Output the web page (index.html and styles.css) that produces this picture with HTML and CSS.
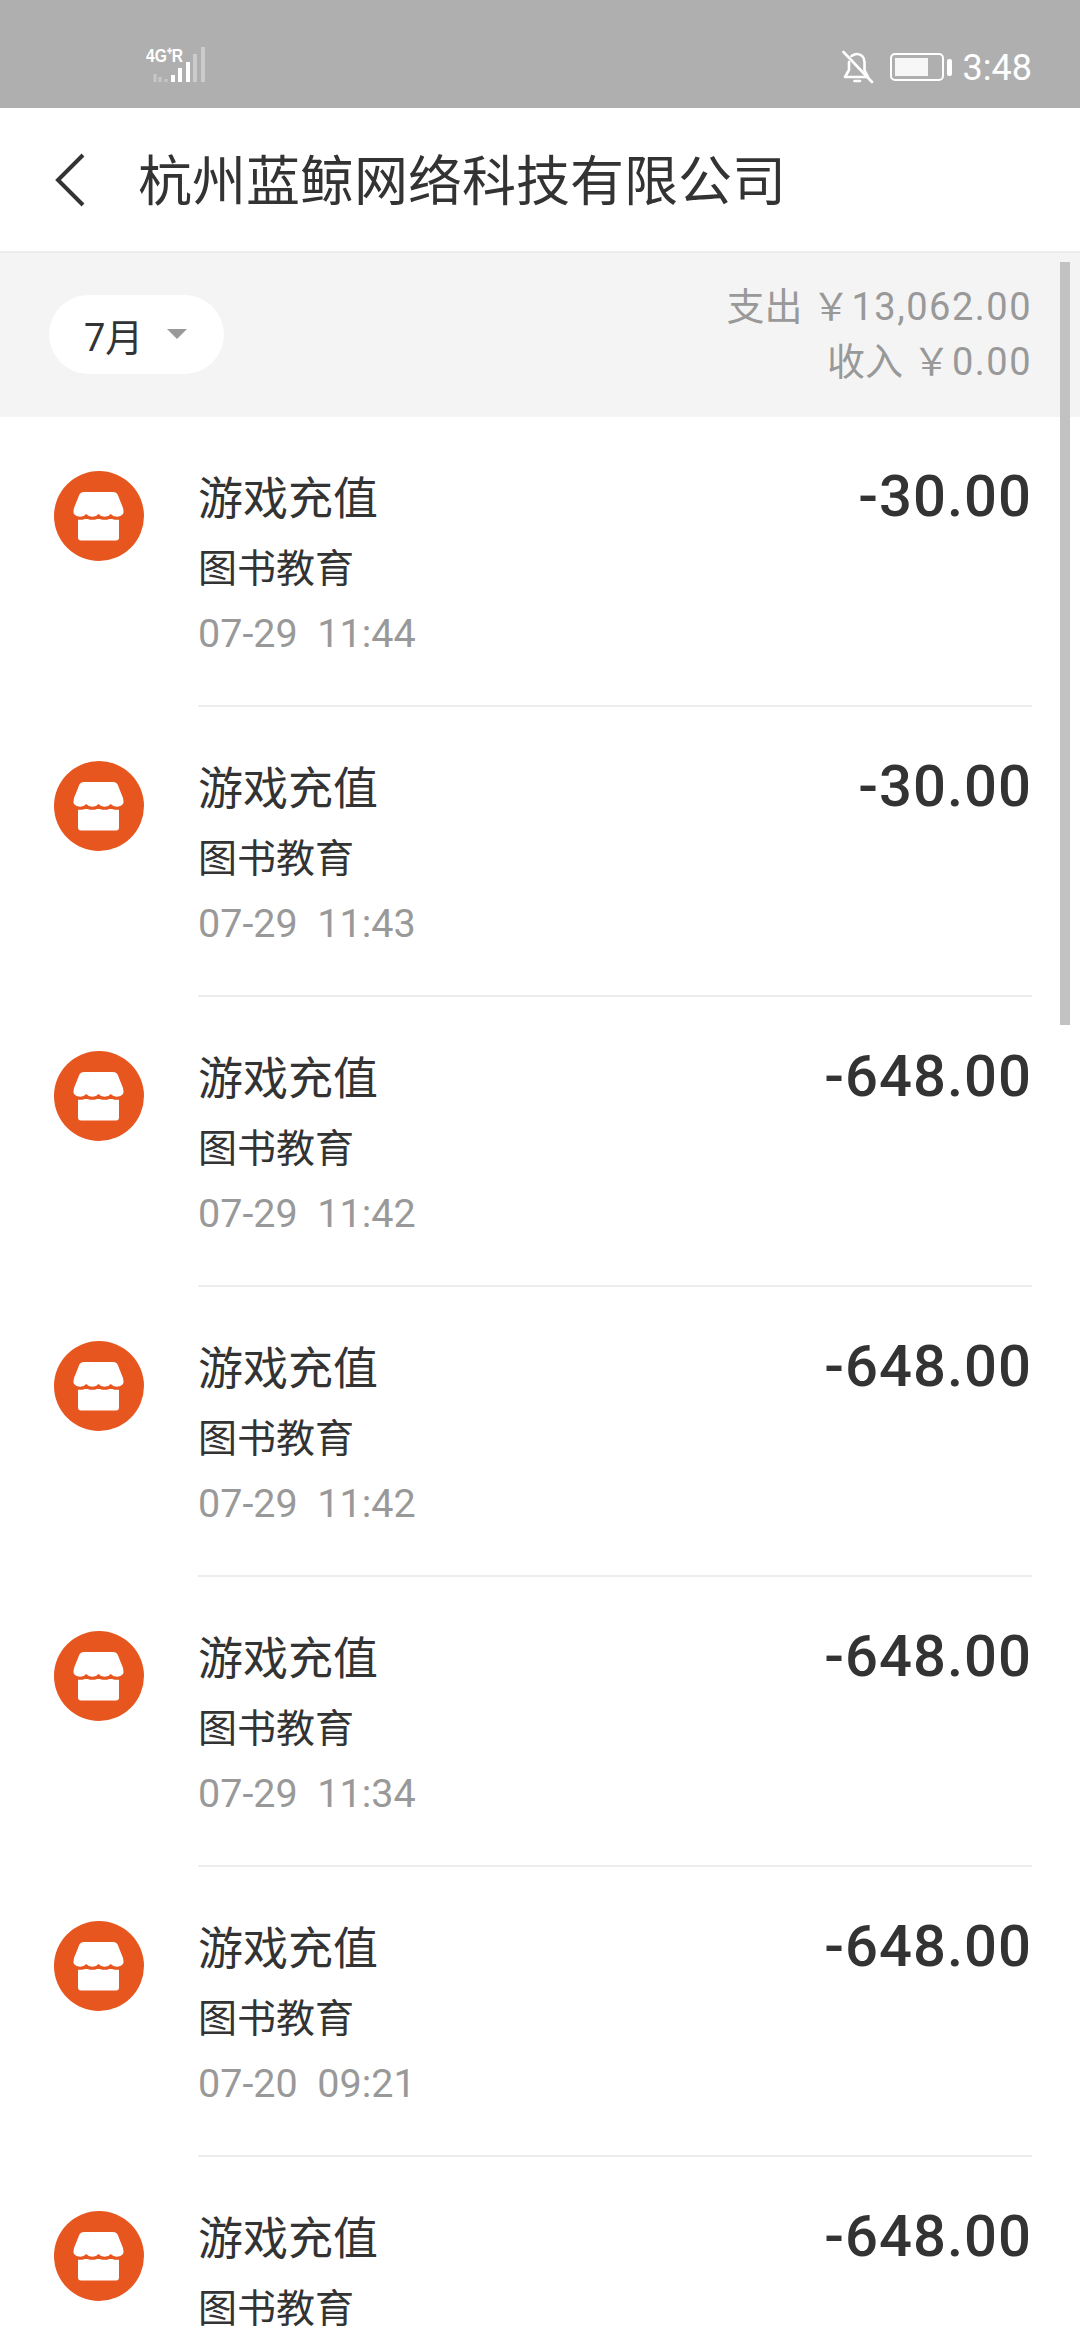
FILE: index.html
```html
<!DOCTYPE html>
<html lang="zh-CN">
<head>
    <meta charset="UTF-8">
    <meta name="viewport" content="width=device-width, initial-scale=1.0">
    <title>杭州蓝鲸网络科技有限公司</title>
    <link rel="stylesheet" href="styles.css">
</head>
<body>
    <svg class="sprites" width="0" height="0">
        <symbol id="store" viewBox="0 0 90 90">
            <circle cx="45" cy="45" r="45" fill="#e8561f"/>
            <rect x="24" y="40" width="41" height="29.5" rx="3" fill="#fff"/>
            <path d="M30 21H59Q63 21 64 24.5L69 37Q70 41 69 43A8 8 0 0 1 56.75 43A8 8 0 0 1 44.5 43A8 8 0 0 1 32.25 43A8 8 0 0 1 20 43Q19 41 20 37L25 24.5Q26 21 30 21Z" fill="#fff" stroke="#e8561f" stroke-width="6" paint-order="stroke"/>
        </symbol>
    </svg>

    <div class="status-bar">
        <svg class="signal" width="62" height="40" viewBox="0 0 62 40">
            <text class="signal-label" x="0" y="17" textLength="37" lengthAdjust="spacingAndGlyphs">4G⁺R</text>
            <path d="M9 29v8M14 32v5M20 34v3" stroke="#fff" stroke-opacity=".3" stroke-width="3"/>
            <path d="M27 30v7M34 23v14M42 17v20" stroke="#fff" stroke-width="4"/>
            <path d="M49 9v28M57 2v35" stroke="#fff" stroke-opacity=".35" stroke-width="4"/>
        </svg>
        <div class="status-right">
            <svg class="bell" width="32" height="34" viewBox="0 0 32 34" fill="none" stroke="#fff" stroke-width="2.6" stroke-linecap="round" stroke-linejoin="round">
                <path d="M3 27H26L22.500 20V12C22.500 7 19 4 15 4C13 4 11 5 9.500 6M7 12V20L3 27"/>
                <path d="M12.500 31H18"/>
                <path d="M1.500 2L30 32"/>
            </svg>
            <div class="battery"><div class="battery-level"></div></div>
            <div class="battery-nub"></div>
            <span class="clock">3:48</span>
        </div>
    </div>

    <header class="title-bar">
        <svg class="back" width="32" height="54" viewBox="0 0 32 54" fill="none" stroke="#333" stroke-width="4">
            <path d="M29 2L4 27L29 52"/>
        </svg>
        <h1>杭州蓝鲸网络科技有限公司</h1>
    </header>

    <section class="summary">
        <div class="month">
            <span>7月</span>
            <i class="caret"></i>
        </div>
        <div class="totals">
            <div>支出 <b>￥13,062.00</b></div>
            <div>收入 <b>￥0.00</b></div>
        </div>
    </section>

    <ul class="bills">
        <li class="bill">
            <svg class="bill-icon"><use href="#store"/></svg>
            <div class="bill-body">
                <div class="bill-text">
                    <div class="bill-name">游戏充值</div>
                    <div class="bill-type">图书教育</div>
                    <div class="bill-time">07-29&nbsp; 11:44</div>
                </div>
                <div class="bill-amount">-30.00</div>
            </div>
        </li>
        <li class="bill">
            <svg class="bill-icon"><use href="#store"/></svg>
            <div class="bill-body">
                <div class="bill-text">
                    <div class="bill-name">游戏充值</div>
                    <div class="bill-type">图书教育</div>
                    <div class="bill-time">07-29&nbsp; 11:43</div>
                </div>
                <div class="bill-amount">-30.00</div>
            </div>
        </li>
        <li class="bill">
            <svg class="bill-icon"><use href="#store"/></svg>
            <div class="bill-body">
                <div class="bill-text">
                    <div class="bill-name">游戏充值</div>
                    <div class="bill-type">图书教育</div>
                    <div class="bill-time">07-29&nbsp; 11:42</div>
                </div>
                <div class="bill-amount">-648.00</div>
            </div>
        </li>
        <li class="bill">
            <svg class="bill-icon"><use href="#store"/></svg>
            <div class="bill-body">
                <div class="bill-text">
                    <div class="bill-name">游戏充值</div>
                    <div class="bill-type">图书教育</div>
                    <div class="bill-time">07-29&nbsp; 11:42</div>
                </div>
                <div class="bill-amount">-648.00</div>
            </div>
        </li>
        <li class="bill">
            <svg class="bill-icon"><use href="#store"/></svg>
            <div class="bill-body">
                <div class="bill-text">
                    <div class="bill-name">游戏充值</div>
                    <div class="bill-type">图书教育</div>
                    <div class="bill-time">07-29&nbsp; 11:34</div>
                </div>
                <div class="bill-amount">-648.00</div>
            </div>
        </li>
        <li class="bill">
            <svg class="bill-icon"><use href="#store"/></svg>
            <div class="bill-body">
                <div class="bill-text">
                    <div class="bill-name">游戏充值</div>
                    <div class="bill-type">图书教育</div>
                    <div class="bill-time">07-20&nbsp; 09:21</div>
                </div>
                <div class="bill-amount">-648.00</div>
            </div>
        </li>
        <li class="bill">
            <svg class="bill-icon"><use href="#store"/></svg>
            <div class="bill-body">
                <div class="bill-text">
                    <div class="bill-name">游戏充值</div>
                    <div class="bill-type">图书教育</div>
                </div>
                <div class="bill-amount">-648.00</div>
            </div>
        </li>
    </ul>

    <div class="scrollbar"></div>
</body>
</html>
```

FILE: styles.css
```css
/* Bill list page */
* {
    box-sizing: border-box;
}
html, body {
    height: 2340px;
    overflow: hidden;
}
body {
    position: relative;
    margin: 0;
    background-color: #fff;
    color: #333;
    font-family: Roboto, "Noto Sans CJK SC", sans-serif;
}
.sprites {
    display: block;
    height: 0;
}

/* Status bar */
.status-bar {
    display: flex;
    justify-content: space-between;
    align-items: center;
    height: 108px;
    padding: 0 48px 0 146px;
    background-color: #afafaf;
    color: #fff;
}
.signal {
    margin-top: 22px;
}
.signal-label {
    fill: #fff;
    font-family: "Liberation Sans", sans-serif;
    font-size: 19px;
    font-weight: bold;
}
.status-right {
    display: flex;
    align-items: center;
    margin-top: 26px;
}
.bell {
    margin-right: 16px;
}
.battery {
    width: 54px;
    height: 28px;
    padding: 3px;
    border: 2px solid #fff;
    border-radius: 5px;
}
.battery-level {
    width: 33px;
    height: 100%;
    background-color: #f7f7f7;
}
.battery-nub {
    width: 5px;
    height: 17px;
    margin-left: 3px;
    border-radius: 2px;
    background-color: #fff;
}
.clock {
    margin-left: 11px;
    padding-top: 2px;
    font-size: 36px;
    line-height: 40px;
}

/* Title bar */
.title-bar {
    display: flex;
    align-items: center;
    height: 145px;
    padding-left: 54px;
    border-bottom: 2px solid #ececec;
}
.back {
    flex-shrink: 0;
}
.title-bar h1 {
    margin: 6px 0 0 52px;
    font-size: 54px;
    font-weight: 400;
    line-height: 70px;
}

/* Month and totals */
.summary {
    display: flex;
    justify-content: space-between;
    align-items: center;
    height: 164px;
    padding: 0 48px 0 49px;
    background-color: #f4f4f4;
}
.month {
    display: flex;
    align-items: center;
    width: 175px;
    height: 79px;
    margin-top: -2px;
    padding-left: 35px;
    border-radius: 40px;
    background-color: #fff;
    font-size: 38px;
}
.caret {
    width: 0;
    height: 0;
    margin-left: 24px;
    border-top: 10px solid #999;
    border-left: 10px solid transparent;
    border-right: 10px solid transparent;
}
.totals {
    color: #999;
    font-size: 38px;
    line-height: 55px;
    text-align: right;
}
.totals b {
    font-weight: 400;
    letter-spacing: 1.5px;
}

/* Bill rows */
.bills {
    margin: 0;
    padding: 0;
    list-style-type: none;
}
.bill {
    display: flex;
    height: 290px;
    padding: 54px 48px 0 54px;
}
.bill-icon {
    flex-shrink: 0;
    width: 90px;
    height: 90px;
}
.bill-body {
    display: flex;
    flex: 1;
    justify-content: space-between;
    height: 236px;
    margin-left: 54px;
    border-bottom: 2px solid #ececec;
}
.bill-name {
    margin-top: -1px;
    font-size: 45px;
    line-height: 60px;
}
.bill-type {
    margin-top: 9px;
    font-size: 39px;
    line-height: 60px;
}
.bill-time {
    margin-top: 5px;
    color: #999;
    font-size: 39.5px;
    line-height: 60px;
}
.bill-amount {
    margin-top: -10px;
    font-size: 58px;
    font-weight: 500;
    letter-spacing: 1px;
    line-height: 70px;
}

/* Scroll thumb floating over the list */
.scrollbar {
    position: absolute;
    top: 262px;
    right: 10px;
    width: 10px;
    height: 763px;
    background-color: #c2c2c2;
}
```
